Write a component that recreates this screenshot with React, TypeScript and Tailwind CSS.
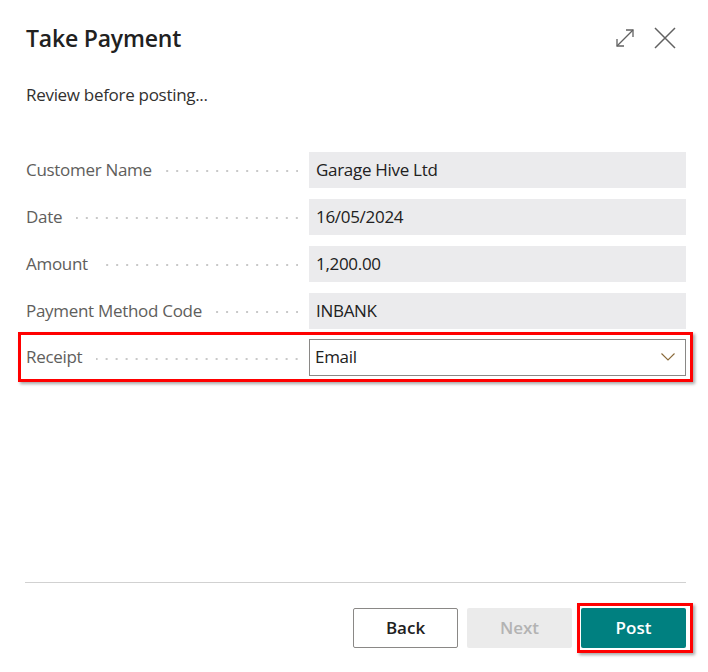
const font = { fontFamily: "'Open Sans', 'Noto Sans', sans-serif" };

const rows = [
  { label: "Customer Name", value: "Garage Hive Ltd" },
  { label: "Date", value: "16/05/2024" },
  { label: "Amount", value: "1,200.00" },
  { label: "Payment Method Code", value: "INBANK" },
];

function Leader() {
  return (
    <div className="flex-1 ml-[14px] mr-[11px] mt-[3px] h-[2px] bg-[linear-gradient(to_left,#c8c8c8_2px,transparent_2px)] bg-[length:10px_2px] bg-repeat-x bg-right" />
  );
}

export default function App() {
  return (
    <div className="w-[708px] h-[672px] bg-white flex flex-col text-[#212121]" style={font}>
      <header className="flex items-center justify-between pl-[26px] pr-[32px] pt-[18px] h-[58px]">
        <h1 className="text-[23px] font-semibold tracking-[-0.2px]">Take Payment</h1>
        <div className="flex items-center gap-[19px] text-[#616161] -mt-[1px]">
          <svg width="20" height="20" viewBox="0 0 20 20" fill="none" stroke="currentColor" strokeWidth="1.3">
            <path d="M2 18 L18 2" />
            <path d="M11 2 H18 V9" />
            <path d="M2 11 V18 H9" />
          </svg>
          <svg width="22" height="22" viewBox="0 0 22 22" fill="none" stroke="currentColor" strokeWidth="1.5">
            <path d="M1 1 L21 21 M21 1 L1 21" />
          </svg>
        </div>
      </header>

      <p className="pl-[26px] mt-[24px] text-[17px] text-[#323130] tracking-[-0.3px]">Review before posting...</p>

      <div className="flex flex-col gap-[11px] pl-[26px] pr-[22px] mt-[44px]">
        {rows.map((r) => (
          <div key={r.label} className="flex items-center h-[36px]">
            <span className="text-[17px] text-[#605e5c] tracking-[-0.3px] whitespace-nowrap">{r.label}</span>
            <Leader />
            <div className="w-[377px] h-[36px] bg-[#ebebed] flex items-center px-[7px] text-[17px] text-[#212121] tracking-[-0.3px]">
              {r.value}
            </div>
          </div>
        ))}
        <div className="relative flex items-center h-[37px] -mt-[1px]">
          <span className="text-[17px] text-[#605e5c] tracking-[-0.3px]">Receipt</span>
          <Leader />
          <div className="w-[377px] h-[37px] border border-[#8a8886] bg-white flex items-center justify-between pl-[5px] pr-[10px] text-[17px] text-[#212121] tracking-[-0.3px]">
            <span>Email</span>
            <svg width="14" height="8" viewBox="0 0 14 8" fill="none" stroke="#8a6a3a" strokeWidth="1.1">
              <path d="M0.5 0.5 L7 7 L13.5 0.5" />
            </svg>
          </div>
          <div className="absolute -left-[8px] -right-[7px] -top-[7px] -bottom-[6px] border-[3px] border-[#ff0000] shadow-[2px_2px_3px_rgba(0,0,0,0.35)]" />
        </div>
      </div>

      <div className="flex-1" />

      <div className="mx-[25px] mr-[22px] h-px bg-[#d1d1d1]" />

      <div className="flex justify-end gap-[9px] pr-[22px] mt-[25px] mb-[24px]">
        <button className="w-[105px] h-[40px] rounded-[2px] border border-[#8a8886] bg-white text-[17px] font-semibold text-[#212121]">Back</button>
        <button className="w-[105px] h-[40px] rounded-[2px] bg-[#ebebeb] text-[17px] font-semibold text-[#b3b3b3]">Next</button>
        <div className="relative">
          <button className="w-[105px] h-[40px] rounded-[2px] bg-[#008080] text-[17px] font-semibold text-white">Post</button>
          <div className="absolute -left-[4px] -right-[7px] -top-[5px] -bottom-[5px] border-[3px] border-[#ff0000] shadow-[2px_2px_3px_rgba(0,0,0,0.35)]" />
        </div>
      </div>
    </div>
  );
}
